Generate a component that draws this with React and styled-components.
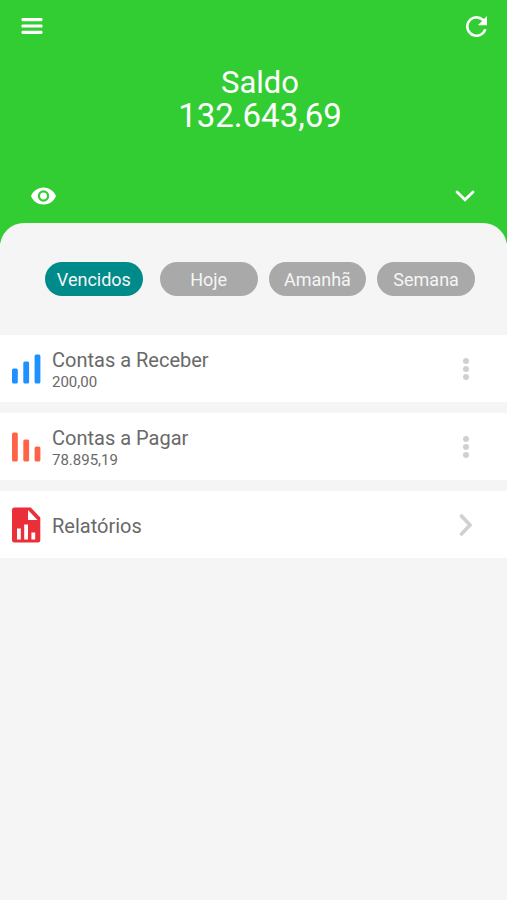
import React, { useState } from "react";
import styled, { createGlobalStyle } from "styled-components";

const GlobalStyle = createGlobalStyle`
  * {
    box-sizing: border-box;
  }
  body {
    margin: 0;
    background: #f5f5f5;
    font-family: Roboto, "Liberation Sans", sans-serif;
  }
`;

const Page = styled.main`
  min-height: 100vh;
  background: #f5f5f5;
`;

const Header = styled.header`
  padding: 9px 13px 30px 14px;
  background: #32cd32;
  color: #fff;
`;

const HeaderRow = styled.div`
  display: flex;
  align-items: center;
  justify-content: space-between;
  padding: ${({ $inset }) => ($inset ? "0 11px" : "0")};
`;

const IconButton = styled.button`
  display: flex;
  align-items: center;
  justify-content: center;
  width: 36px;
  height: 34px;
  padding: 0;
  border: 0;
  background: none;
  color: inherit;
  cursor: pointer;
`;

const Balance = styled.h1`
  margin: 0;
  padding: 23px 0 47px 12px;
  font-size: 31px;
  line-height: 33px;
  font-weight: 400;
  text-align: center;
`;

const BalanceValue = styled.span`
  display: block;
  font-size: 33px;
`;

const Sheet = styled.section`
  margin-top: -20px;
  padding-top: 39px;
  border-radius: 24px 24px 0 0;
  background: #f5f5f5;
`;

const Filters = styled.div`
  display: flex;
  gap: 11px;
  padding: 0 32px 0 45px;
`;

const Pill = styled.button`
  flex: 1;
  height: 34px;
  padding: 0;
  border: 0;
  border-radius: 17px;
  background: ${({ $active }) => ($active ? "#008b8b" : "#a9a9a9")};
  color: #f5f5f5;
  font-family: inherit;
  font-size: 18px;
  cursor: pointer;

  &:first-child {
    margin-right: 6px;
  }
`;

const List = styled.ul`
  display: grid;
  gap: 11px;
  margin: 39px 0 0;
  padding: 0;
  list-style: none;
`;

const Row = styled.li`
  display: flex;
  align-items: center;
  min-height: 67px;
  padding: 0 23px 0 12px;
  background: #fff;
  color: #696969;
`;

const RowText = styled.div`
  flex: 1;
  margin-left: 11px;
  padding-top: 2px;
`;

const RowTitle = styled.h2`
  margin: 0;
  font-size: 20px;
  line-height: 24px;
  font-weight: 400;
`;

const RowValue = styled.p`
  margin: 0;
  font-size: 15px;
  line-height: 20px;
`;

const RowAction = styled(IconButton)`
  color: #d0d0d0;
`;

const MenuIcon = () => (
  <svg width="22" height="18" viewBox="0 0 22 18" fill="currentColor">
    <rect x="0.5" y="1" width="21" height="3.2" rx="1.2" />
    <rect x="0.5" y="7.4" width="21" height="3.2" rx="1.2" />
    <rect x="0.5" y="13.8" width="21" height="3.2" rx="1.2" />
  </svg>
);

const RefreshIcon = () => (
  <svg width="21" height="21" viewBox="4 4 16 16" fill="currentColor">
    <path d="M17.65 6.35A7.96 7.96 0 0 0 12 4a8 8 0 1 0 7.73 10h-2.08A6 6 0 1 1 12 6c1.66 0 3.14.69 4.22 1.78L13 11h7V4z" />
  </svg>
);

const EyeIcon = () => (
  <svg width="25" height="18" viewBox="1 4.5 22 15" fill="currentColor">
    <path d="M12 4.5C7 4.5 2.73 7.61 1 12c1.73 4.39 6 7.5 11 7.5s9.27-3.11 11-7.5c-1.73-4.39-6-7.5-11-7.5zM12 17a5 5 0 1 1 0-10 5 5 0 0 1 0 10zm0-8a3 3 0 1 0 0 6 3 3 0 0 0 0-6z" />
  </svg>
);

const ChevronDown = () => (
  <svg width="20" height="12" viewBox="0 0 20 12" fill="none">
    <path
      d="M2 2l8 7.800L18 2"
      stroke="currentColor"
      strokeWidth="2.8"
      strokeLinecap="round"
    />
  </svg>
);

const ChevronRight = () => (
  <svg width="14" height="22" viewBox="0 0 14 22" fill="none">
    <path
      d="M2.500 2 11 11l-8.500 9"
      stroke="currentColor"
      strokeWidth="3.6"
      strokeLinecap="round"
    />
  </svg>
);

const DotsIcon = () => (
  <svg width="6" height="22" viewBox="0 0 6 22" fill="currentColor">
    <circle cx="3" cy="3" r="3" />
    <circle cx="3" cy="11" r="3" />
    <circle cx="3" cy="19" r="3" />
  </svg>
);

const BarsIcon = ({ heights, color }) => (
  <svg width="29" height="30" viewBox="0 0 29 30" fill={color}>
    {heights.map((h, i) => (
      <rect key={i} x={i * 11.3} y={29.5 - h} width="5.8" height={h} rx="1.5" />
    ))}
  </svg>
);

const ReportIcon = () => (
  <svg width="29" height="36" viewBox="0 0 29 36">
    <path
      fill="#eb2f38"
      d="M2.5.5h16.3L28.300 10.500V33a2.500 2.500 0 0 1-2.500 2.500H2.500A2.500 2.500 0 0 1 0 33V3A2.500 2.500 0 0 1 2.500.5z"
    />
    <path
      fill="#fff"
      d="M16 3v10h9.500zM5 21.500h3.800v11H5zM12.200 17.500H16v15h-3.800zM19.400 25.500h3.800v7h-3.800z"
    />
  </svg>
);

const periods = ["Vencidos", "Hoje", "Amanhã", "Semana"];

const App = () => {
  const [period, setPeriod] = useState("Vencidos");
  const [visible, setVisible] = useState(true);

  return (
    <Page>
      <GlobalStyle />
      <Header>
        <HeaderRow>
          <IconButton aria-label="Menu">
            <MenuIcon />
          </IconButton>
          <IconButton aria-label="Atualizar">
            <RefreshIcon />
          </IconButton>
        </HeaderRow>
        <Balance>
          Saldo
          <BalanceValue>{visible ? "132.643,69" : "••••••"}</BalanceValue>
        </Balance>
        <HeaderRow $inset>
          <IconButton
            aria-label="Mostrar saldo"
            aria-pressed={visible}
            onClick={() => setVisible(!visible)}
          >
            <EyeIcon />
          </IconButton>
          <IconButton aria-label="Expandir">
            <ChevronDown />
          </IconButton>
        </HeaderRow>
      </Header>
      <Sheet>
        <Filters>
          {periods.map((name) => (
            <Pill
              key={name}
              $active={name === period}
              aria-pressed={name === period}
              onClick={() => setPeriod(name)}
            >
              {name}
            </Pill>
          ))}
        </Filters>
        <List>
          <Row>
            <BarsIcon heights={[15, 22, 29]} color="#1e90ff" />
            <RowText>
              <RowTitle>Contas a Receber</RowTitle>
              <RowValue>200,00</RowValue>
            </RowText>
            <RowAction aria-label="Opções de contas a receber">
              <DotsIcon />
            </RowAction>
          </Row>
          <Row>
            <BarsIcon heights={[29, 22, 15]} color="#ff6347" />
            <RowText>
              <RowTitle>Contas a Pagar</RowTitle>
              <RowValue>78.895,19</RowValue>
            </RowText>
            <RowAction aria-label="Opções de contas a pagar">
              <DotsIcon />
            </RowAction>
          </Row>
          <Row>
            <ReportIcon />
            <RowText>
              <RowTitle>Relatórios</RowTitle>
            </RowText>
            <RowAction aria-label="Abrir relatórios">
              <ChevronRight />
            </RowAction>
          </Row>
        </List>
      </Sheet>
    </Page>
  );
};

export default App;
